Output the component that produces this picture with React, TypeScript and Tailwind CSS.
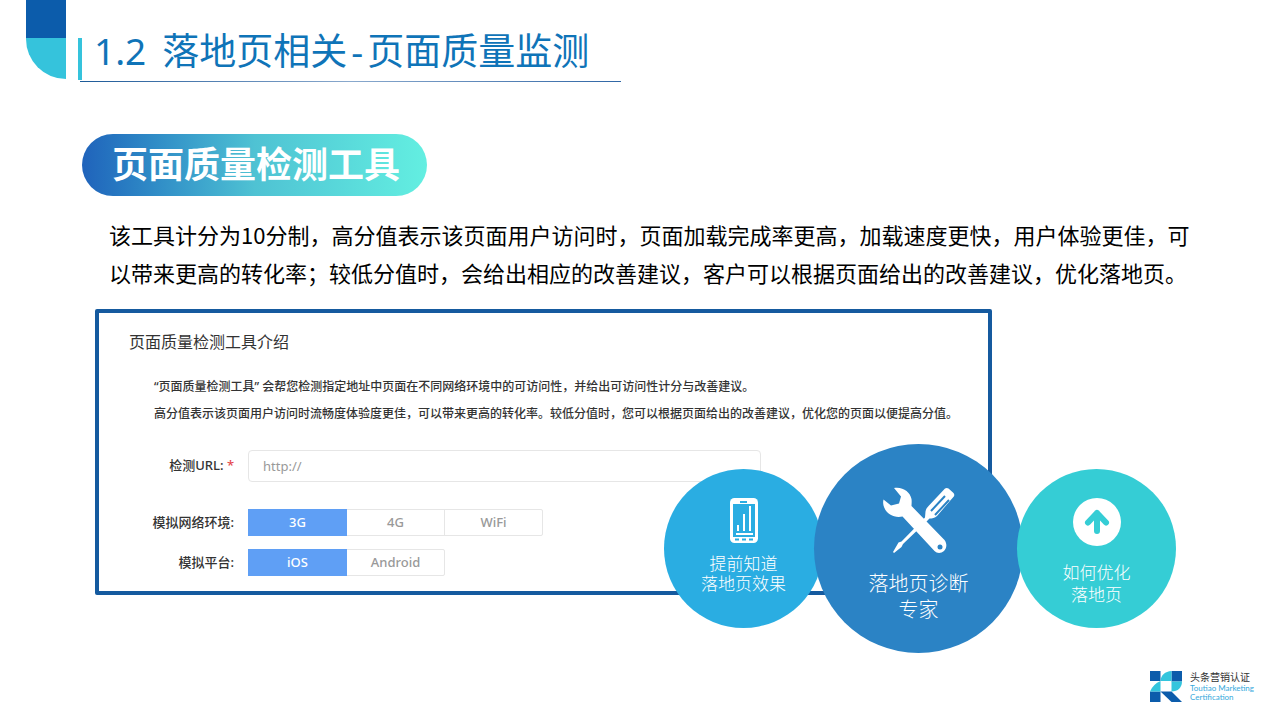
import React from 'react';
import type { ReactNode } from 'react';

interface SegmentedProps {
  name: string;
  label: string;
  options: string[];
}

function Segmented({ name, label, options }: SegmentedProps) {
  return (
    <div role="radiogroup" aria-labelledby={`${name}-label`} className="flex items-center">
      <span id={`${name}-label`} className="w-[135px] mr-3.5 text-right font-medium">{label}</span>
      <div className="flex">
        {options.map((option, i) => (
          <label
            key={option}
            className="relative w-[99px] h-[27px] -mr-px flex items-center justify-center border border-[#e6e6e6] text-[#999] font-medium has-checked:z-10 has-checked:bg-[#5f9ff5] has-checked:border-[#5f9ff5] has-checked:text-white last:rounded-r-xs"
          >
            <input
              type="radio"
              name={name}
              value={option}
              defaultChecked={i === 0}
              className="absolute inset-0 appearance-none"
            />
            {option}
          </label>
        ))}
      </div>
    </div>
  );
}

function PhoneIcon() {
  return (
    <svg width="28" height="46" viewBox="0 0 28 46" fill="none">
      <rect width="28" height="45" rx="4.5" fill="#fff" />
      <rect x="10" y="3" width="7" height="2" fill="#2aade2" />
      <rect x="3" y="6" width="22" height="33" fill="#2aade2" />
      <path d="M8 27v6M14 16v17M20 8v25M6 36h17" stroke="#fff" strokeWidth="2" />
      <path d="M5 41.500h4M12 41.500h4M19 41.500h4" stroke="#2aade2" strokeWidth="2" />
    </svg>
  );
}

function ToolsIcon() {
  return (
    <svg width="72" height="66" viewBox="0 0 72 66" fill="#fff">
      {/* Screwdriver */}
      <path d="M62 1.500C63 .8 64.500 .8 65.500 1.500L70.500 6C71.500 7 71.500 8.500 70.800 9.500L54 29C52 31 49 31.500 46.500 31.500L43.500 34.500L20 57L18.500 60L11 66L10 65L15.500 55.500L18.500 54.500L42 30.500L42.500 24.500C43 22 44 20.500 46 18.500Z" />
      <path d="M62 9L48 24M66 13L52 28" stroke="#2b83c5" strokeWidth="2" />
      {/* Wrench */}
      <path d="M11 1C20-.5 27 5 28.500 12C28.900 14.500 28.500 17.500 28.500 19L61.500 53C64.500 57 63.500 61.500 61 64C58 66.500 54 66.500 51.500 64L19.500 29.500C11 31.500 2.500 26.500.5 18.500C0 16 0 14.500.5 12.500L8 18.500L16 16.500L18 9.500Z" />
      <circle cx="57" cy="60" r="2.500" fill="#2b83c5" />
    </svg>
  );
}

function ArrowIcon() {
  return (
    <svg width="48" height="48" viewBox="0 0 48 48" fill="none">
      <circle cx="24" cy="24" r="24" fill="#fff" />
      <path d="M24 33V15M15 24.500l9-9.500 9 9.500" stroke="#35cdd5" strokeWidth="6" strokeLinecap="round" strokeLinejoin="round" />
    </svg>
  );
}

function BrandMark() {
  return (
    <svg width="32" height="31" viewBox="0 0 32 31">
      <path d="M0 0h10.500v10H0zM21.500 0H32v10.500H21.500zM0 20.500h10.500V31H0z" fill="#0c5cab" />
      <path d="M0 20.500A20 20 0 0 1 10.500 10v10.500zM10.500 10C11 4 15 .5 21.500 0v10z" fill="#33c5dd" />
      <path d="M21.500 10.500H32c0 6-4 10-10.500 10z" fill="#33c5dd" />
      <path d="M10.500 20.500h11L32 31H21.500z" fill="#0c5cab" />
    </svg>
  );
}

interface BubbleProps {
  className: string;
  icon: ReactNode;
  lines: string[];
}

function Bubble({ className, icon, lines }: BubbleProps) {
  return (
    <div className={`flex flex-col items-center shrink-0 rounded-full text-white text-center font-light ${className}`}>
      {icon}
      <p>
        {lines.map((line) => (
          <span key={line} className="block">{line}</span>
        ))}
      </p>
    </div>
  );
}

export default function App() {
  return (
    <div className="min-h-screen flex flex-col bg-white text-black font-['Noto_Sans','Noto_Sans_CJK_SC',sans-serif]">
      {/* Header */}
      <header className="flex items-start pl-[26px]">
        <div className="w-10 mr-3">
          <div className="h-[38px] bg-[#0c5cab]" />
          <div className="h-[41px] bg-[#35c3dc] rounded-bl-full" />
        </div>
        <div className="pt-[22px]">
          <div className="flex items-end">
            <div className="w-1 h-[42px] mt-4 bg-[#35c3dc]" />
            <h1 className="flex gap-4 pl-3 pb-0.5 text-[37px] leading-[54px] text-[#0f74b8]">
              <span>1.2</span>
              <span>
                落地页相关<span className="mx-1">-</span>页面质量监测
              </span>
            </h1>
          </div>
          <div className="h-px ml-0.5 -mr-8 mt-px bg-linear-to-r from-[#1b5a98] via-[#8aa9cd] to-[#2f66a5]" />
        </div>
      </header>

      <main className="flex flex-col items-start pt-[52px] pr-[85px]">
        <h2 className="ml-[82px] h-[62px] pl-[30px] pr-[27px] pb-1.5 flex items-center rounded-full bg-linear-to-r from-[#2063bb] via-[#4fc2d3] to-[#63efe1] text-white text-4xl font-bold font-['Noto_Sans_CJK_SC',sans-serif]">
          页面质量检测工具
        </h2>
        <p className="ml-[109px] mt-[19px] text-[22px] leading-[38px] font-['Noto_Sans_CJK_SC',sans-serif]">
          该工具计分为10分制，高分值表示该页面用户访问时，页面加载完成率更高，加载速度更快，用户体验更佳，可以带来更高的转化率；较低分值时，会给出相应的改善建议，客户可以根据页面给出的改善建议，优化落地页。
        </p>

        {/* Tool panel */}
        <div className="relative ml-[95px] mt-[18px]">
          <section className="w-[897px] border-4 border-[#155a9f] rounded-xs pt-[17px] pb-[15px] text-[#333] text-[13px]">
            <h3 className="ml-[30px] text-base leading-6">页面质量检测工具介绍</h3>
            <div className="ml-[55px] mt-[19px] text-xs leading-[27px] font-medium whitespace-nowrap">
              <p>“页面质量检测工具” 会帮您检测指定地址中页面在不同网络环境中的可访问性，并给出可访问性计分与改善建议。</p>
              <p>高分值表示该页面用户访问时流畅度体验度更佳，可以带来更高的转化率。较低分值时，您可以根据页面给出的改善建议，优化您的页面以便提高分值。</p>
            </div>
            <form className="mt-[23px] flex flex-col">
              <div className="flex items-center">
                <label htmlFor="url" className="w-[135px] mr-3.5 text-right font-medium">
                  检测URL: <span className="text-[#e5484d]">*</span>
                </label>
                <input
                  id="url"
                  type="text"
                  placeholder="http://"
                  className="w-[513px] h-8 px-3.5 border border-[#e6e6e6] rounded-sm placeholder:text-[#999] outline-none"
                />
              </div>
              <div className="mt-[27px] flex flex-col gap-[13px]">
                <Segmented name="network" label="模拟网络环境:" options={['3G', '4G', 'WiFi']} />
                <Segmented name="platform" label="模拟平台:" options={['iOS', 'Android']} />
              </div>
            </form>
          </section>

          {/* Bubbles over the panel corner */}
          <div className="absolute z-20 left-[569px] top-[135px] flex items-center">
            <Bubble
              className="size-[159px] pt-[29px] gap-2.5 bg-[#2aade2] text-[17px] leading-5"
              icon={<PhoneIcon />}
              lines={['提前知道', '落地页效果']}
            />
            <Bubble
              className="z-10 size-[209px] -ml-[9px] pt-[43px] gap-[18px] bg-[#2b83c5] text-xl leading-[26px]"
              icon={<ToolsIcon />}
              lines={['落地页诊断', '专家']}
            />
            <Bubble
              className="z-20 size-[159px] -ml-1.5 pt-[29px] gap-4 bg-[#35cdd5] text-[17px] leading-[22px]"
              icon={<ArrowIcon />}
              lines={['如何优化', '落地页']}
            />
          </div>
        </div>
      </main>

      <footer className="mt-auto flex items-center justify-end gap-2 pr-[26px] pb-[18px]">
        <BrandMark />
        <div className="text-[8px] leading-[9px] text-[#35a9dc] font-['Lato','Noto_Sans_CJK_SC',sans-serif]">
          <p className="text-[10px] leading-[13px] text-[#333]">头条营销认证</p>
          <p>Toutiao Marketing</p>
          <p>Certification</p>
        </div>
      </footer>
    </div>
  );
}
